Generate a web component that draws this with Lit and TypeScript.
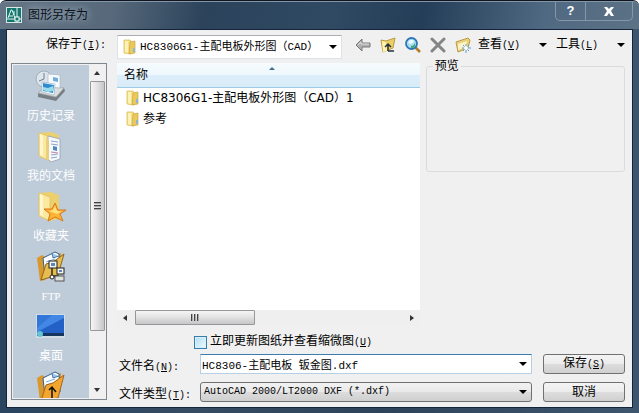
import { LitElement, html, css, svg } from "lit";
import { customElement, state } from "lit/decorators.js";

const folder = html`<svg class="folder" viewBox="0 0 16 16" aria-hidden="true">
  <path d="M2 1h6l1 1v13l-7-1z" fill="#f7e08a" stroke="#d9b64e" stroke-width=".7" />
  <path d="M8 3l5-1v12l-6 1z" fill="#e9c95c" stroke="#cfa640" stroke-width=".7" />
  <path d="M3 2h3v12l-3-1z" fill="#fdf2b8" />
  <path d="M11 9h2v4h-2z" fill="#8fb5d6" />
</svg>`;

const arrow = html`<svg class="arrow" viewBox="0 0 8 4" aria-hidden="true"><path d="M0 0h8l-4 4z" fill="#000" /></svg>`;

const folderBody = svg`
  <path d="M4 3l12-1 8 3v24l-9 2z" fill="#ecd06e"/>
  <path d="M4 3l11 4v24L4 26z" fill="#fbe9a0" stroke="#e2c05c" stroke-width=".8"/>
  <path d="M5 4l3 1v21l-3-1z" fill="#fff6cc"/>`;

const openFolder = svg`
  <path d="M2 8l5-3 3 2 16-4v6L10 30 5 31z" fill="#d9982c"/>
  <path d="M8 8l12-6 4 2 1 18-15 4z" fill="#fafdff" stroke="#2f5f8f"/>
  <path d="M17 3l1 5 6-2" fill="#9cc8ee" stroke="#2f5f8f" stroke-width=".8"/>
  <path d="M11 12l9-3M11 15l10-3" stroke="#7fb0dd"/>`;

const placeIcons = {
  history: svg`
    <circle cx="9" cy="9" r="8" fill="#dde5ec" stroke="#a3afba"/>
    <path d="M9 3v6l-5 2" fill="none" stroke="#6f7e8c"/>
    <path d="M3 23l18 4 8-9 1 3-9 10L3 27z" fill="#777f84"/>
    <path d="M3 23l7-6 19 1-8 9z" fill="#dadedf" stroke="#969da1" stroke-width=".7"/>
    <path d="M13 4l12 1v13l-12-1z" fill="#f6fafd" stroke="#a9bac7" stroke-width=".7"/>
    <path d="M18 7l5 1v4l-5-1z" fill="#70abda"/>
    <path d="M7 12l13 2-1 11-12-3z" fill="#fff" stroke="#9fb3c3" stroke-width=".7"/>
    <path d="M8 13l11 2-1 8-10-2z" fill="#2d8dd0"/>
    <path d="M8 17l5 1 5-2v5l-5 1-5-2z" fill="#9bdcec"/>`,
  documents: svg`${folderBody}
    <path d="M13 6l12 3v20l-9 3-3-3z" fill="#f5f8fc" stroke="#93a3b3" stroke-width=".8"/>
    <path d="M16 11l7 1M16 14l7 1M16 25l7-1M16 28l6-1" stroke="#8ba5cb"/>
    <path d="M18 16l4 1v4l-4-1z" fill="#4f87c3"/>
    <path d="M16 22l7 1" stroke="#c786a0"/>
    <path d="M14 30V11l-3-4v22z" fill="#e9cf79"/>`,
  favorites: svg`${folderBody}
    <path d="M20 13l3 7 8 0-6 4 3 7-8-4-7 4 2-7-6-5 8 0z" fill="#fdb334" stroke="#d9771c"/>
    <path d="M20 16l2 5 5 0-5 3-8-3 4-1z" fill="#ffe17d"/>`,
  ftp: svg`${openFolder}
    <path d="M6 30l5-16 7-2 11-8-6 21z" fill="#e8bd50" stroke="#92651c"/>
    <path d="M17 18v8h6v4" fill="none" stroke="#222" stroke-width="1.4"/>
    <rect x="14" y="11" width="8" height="7" fill="#f6f6ed" stroke="#222"/>
    <rect x="16" y="13" width="4" height="3" fill="#5d86bd"/>
    <rect x="22" y="18" width="7" height="6" fill="#f6f6ed" stroke="#222"/>
    <rect x="24" y="20" width="3" height="2" fill="#5d86bd"/>
    <rect x="20" y="26" width="9" height="5" fill="#dfe2dc" stroke="#555"/>
    <circle cx="17" cy="27" r="2" fill="#fff" stroke="#222"/>`,
  desktop: svg`
    <rect x="1" y="4" width="29" height="24" fill="#d2dce5"/>
    <rect x="2" y="5" width="27" height="19" fill="#2360c5"/>
    <path d="M2 5h27v3L2 22z" fill="#4387e6"/>
    <path d="M2 5h15L2 18z" fill="#3176d8"/>
    <rect x="2" y="23" width="27" height="3" fill="#17365f"/>
    <circle cx="5" cy="24" r="3" fill="#64c3d5"/>`,
  buzzsaw: svg`${openFolder}
    <path d="M6 31l5-16 7-2 11-8-6 23z" fill="#f3a62d" stroke="#a6641a"/>
    <path d="M17 18v12M14 20l3-3 4 5M14 29h6" fill="none" stroke="#111" stroke-width="1.5"/>`,
};

interface Place {
  name: string;
  icon: keyof typeof placeIcons;
}

@customElement("app-root")
export class SaveDrawingDialog extends LitElement {
  @state() private fileName = "HC8306-主配电板 钣金图.dxf";

  private places: Place[] = [
    { name: "历史记录", icon: "history" },
    { name: "我的文档", icon: "documents" },
    { name: "收藏夹", icon: "favorites" },
    { name: "FTP", icon: "ftp" },
    { name: "桌面", icon: "desktop" },
    { name: "", icon: "buzzsaw" },
  ];

  private files = ["HC8306G1-主配电板外形图（CAD）1", "参考"];

  static styles = css`
    * { box-sizing: border-box; }
    :host {
      display: block;
      height: 100vh;
      min-height: 340px;
      color: #000;
      font: 12px/16px "Liberation Sans", "Noto Sans CJK SC", sans-serif;
    }
    button, input, select { font: inherit; color: inherit; margin: 0; padding: 0; }
    svg { display: block; flex: none; }
    .key { font: 10px/16px "Liberation Mono", monospace; }
    .window {
      height: 100%;
      display: flex;
      flex-direction: column;
      padding: 0 6px 5px;
      background: linear-gradient(90deg, #2a4560, #344b62 30%, #2d435a 60%, #3d566e);
      border-top: 1px solid #10151f;
      border-radius: 6px 6px 0 0;
    }
    .titlebar {
      flex: none;
      height: 28px;
      display: flex;
      align-items: flex-start;
      margin: 0 -6px;
      padding: 0 6px;
      border-top: 1px solid #8296a8;
      border-radius: 6px 6px 0 0;
      background: linear-gradient(100deg, #667585, #56687a 18%, #2b435b 32%, #304a63 52%, #243d58 66%, #506982 85%, #5c7285);
    }
    .brand { width: 16px; height: 16px; margin-top: 5px; }
    h1 {
      flex: 1;
      margin: 5px 0 0 6px;
      font-size: 12px;
      font-weight: 400;
      line-height: 16px;
      color: #0b1119;
      text-shadow: 0 0 8px #9aabbb, 0 0 8px #9aabbb;
    }
    .caption {
      display: flex;
      border: 1px solid #8497a8;
      border-top: 0;
      border-radius: 0 0 5px 5px;
    }
    .caption button {
      width: 29px;
      height: 18px;
      display: grid;
      place-items: center;
      border: 0;
      background: none;
      color: #fff;
      font: bold 13px/16px "Liberation Sans", sans-serif;
    }
    .caption button + button { width: 47px; border-left: 1px solid #8497a8; }
    .client {
      flex: 1;
      min-height: 0;
      display: grid;
      grid-template-columns: 96px minmax(0, 1fr);
      grid-template-rows: 28px minmax(0, 1fr);
      column-gap: 10px;
      row-gap: 1px;
      padding: 4px 7px 5px 4px;
      border: 1px solid #a9b8c4;
      outline: 1px solid #14243a;
      outline-offset: -1px;
      background: #f0f0f0;
    }
    .save-in { padding: 2px 1px 0 0; text-align: right; white-space: nowrap; }
    .toolbar { display: flex; align-items: flex-start; padding-top: 1px; min-width: 0; }
    .combo {
      height: 24px;
      display: flex;
      align-items: center;
      background: #fff;
      border: 1px solid #dfe3e8;
    }
    .combo select, .combo input {
      flex: 1;
      min-width: 0;
      height: 100%;
      appearance: none;
      border: 0;
      outline: 0;
      background: none;
      font: 11px/16px "Liberation Mono", "Noto Sans CJK SC", monospace;
    }
    .location { flex: 0 1 225px; padding: 0 4px 0 4px; gap: 2px; border-top-color: #abadb3; }
    .folder { width: 16px; height: 16px; }
    .arrow { width: 8px; height: 4px; pointer-events: none; }
    .tool { width: 25px; height: 20px; display: grid; place-items: center; border: 0; background: none; }
    .tools { display: flex; margin-left: 8px; }
    .menu {
      display: flex;
      align-items: center;
      justify-content: space-between;
      width: 69px;
      height: 20px;
      border: 0;
      background: none;
      white-space: nowrap;
    }
    .menus { display: flex; gap: 9px; margin-left: 3px; }
    .places {
      display: flex;
      min-height: 0;
      margin-bottom: 2px;
      border: 1px solid #7f8790;
      background: #f0f0f0;
      padding: 1px;
    }
    .places ul {
      flex: 1;
      margin: 0;
      padding: 5px 0 0;
      list-style: none;
      overflow: hidden;
      background: #becbd9;
    }
    .place {
      display: flex;
      flex-direction: column;
      align-items: center;
      gap: 5px;
      width: 100%;
      height: 60px;
      border: 0;
      background: none;
      color: #fff;
    }
    .place svg { width: 32px; height: 33px; }
    .place.latin { font: 11px/16px "Liberation Serif", serif; }
    .vbar { width: 16px; display: flex; flex-direction: column; align-items: center; }
    .end { flex: none; width: 16px; height: 16px; display: grid; place-items: center; border: 0; background: none; }
    .vthumb {
      width: 15px;
      flex: 1;
      margin: 0 0 51px;
      display: grid;
      place-items: center;
      border: 1px solid #979797;
      border-radius: 1px;
      background: linear-gradient(90deg, #f5f5f5, #e3e3e3 45%, #c6c6c9);
    }
    .main { display: flex; flex-direction: column; min-width: 0; min-height: 0; }
    .browse { flex: 1; min-height: 0; display: flex; gap: 6px; }
    .list { flex: 304; min-width: 0; display: flex; flex-direction: column; background: #fff; }
    table { width: 100%; border-collapse: collapse; font-family: "DejaVu Sans", "Noto Sans CJK SC", sans-serif; }
    th {
      height: 24px;
      padding: 0 0 0 7px;
      text-align: left;
      font-weight: 400;
      background: linear-gradient(#f6fbfe, #eef8fd 48%, #dceefa 52%, #d8ecf8);
      border-bottom: 1px solid #9ccbe6;
    }
    .heading { display: grid; grid-template-columns: 1fr auto 1fr; }
    .heading svg { width: 6px; height: 3px; }
    td { height: 21px; padding: 0 0 0 8px; }
    .entry { display: flex; align-items: center; gap: 2px; white-space: nowrap; }
    .rows { flex: 1; min-height: 0; overflow: hidden; }
    .hbar { flex: none; display: flex; height: 16px; background: #efefef; }
    .hthumb {
      flex: 0 1 120px;
      height: 15px;
      margin-left: 2px;
      display: grid;
      place-items: center;
      border: 1px solid #979797;
      border-radius: 1px;
      background: linear-gradient(#f5f5f5, #e3e3e3 45%, #c6c6c9);
    }
    .hbar .end:last-child { margin-left: auto; }
    fieldset {
      flex: 198;
      min-width: 0;
      height: 114px;
      margin: -5px 0 0;
      padding: 0;
      border: 1px solid #d9dcdf;
      border-radius: 3px;
    }
    legend { margin-left: 6px; padding: 0 2px; }
    .form {
      flex: none;
      display: grid;
      grid-template-columns: 83px minmax(0, 1fr) 82px;
      grid-template-rows: 27px 28px 20px;
      align-items: start;
      padding-top: 1px;
    }
    .check { grid-column: 1 / -1; display: flex; align-items: center; gap: 3px; padding: 6px 0 0 77px; height: 24px; }
    .check input {
      appearance: none;
      width: 13px;
      height: 13px;
      border: 1px solid #347fae;
      background: linear-gradient(135deg, #b2def5, #eef9fe);
      box-shadow: inset 0 0 0 1px #d9f0fb;
    }
    .form .label { padding: 4px 0 0 2px; white-space: nowrap; }
    .name, .type { height: 20px; margin-right: 11px; padding-right: 4px; }
    .name { border: 1px solid #b5cfe7; border-top-color: #3d7bad; }
    .name input { padding-left: 1px; }
    .drop { width: 12px; height: 18px; display: grid; place-items: center end; border: 0; background: none; }
    .type {
      border: 1px solid #707070;
      border-radius: 3px;
      background: linear-gradient(#f2f2f2, #e9e9e9 48%, #dcdcdc 52%, #cfcfcf);
    }
    .type select { padding-left: 3px; font: 10px/16px "Liberation Mono", monospace; }
    .push {
      height: 20px;
      border: 1px solid #707070;
      border-radius: 3px;
      background: linear-gradient(#f4f4f4, #ececec 48%, #dddddd 52%, #d0d0d0);
    }
  `;

  render() {
    return html`
      <div class="window">
        <header class="titlebar">
          <svg class="brand" viewBox="0 0 16 16" aria-hidden="true">
            <rect width="16" height="16" fill="#d7e8e6" />
            <rect x="1" y="1" width="14" height="14" fill="#12776f" />
            <path d="M2 11L5 3h1l3 8M3 9h4M8 4v4M11 1v14M1 12h14" fill="none" stroke="#eaf5f3" />
            <rect x="9" y="10" width="4" height="4" fill="#12776f" stroke="#fff" />
          </svg>
          <h1>图形另存为</h1>
          <div class="caption">
            <button aria-label="帮助">?</button>
            <button aria-label="关闭">
              <svg width="10" height="9" viewBox="0 0 10 9"><path d="M0 0h3l2 2 2-2h3L7 4l3 5H7L5 6 3 9H0l3-5z" fill="#fff" /></svg>
            </button>
          </div>
        </header>
        <main class="client">
          <label class="save-in" for="location">保存于<span class="key">(<u>I</u>):</span></label>
          <div class="toolbar">
            <div class="combo location">
              ${folder}
              <select id="location"><option>HC8306G1-主配电板外形图（CAD）</option></select>
              ${arrow}
            </div>
            <div class="tools">
              <button class="tool" aria-label="后退">
                <svg width="16" height="14" viewBox="0 0 16 14"><path d="M1 7l6-6v4h8v4H7v4z" fill="#b0b0b0" stroke="#777" /><path d="M3 7l3-3v2h8" fill="none" stroke="#ddd" /></svg>
              </button>
              <button class="tool" aria-label="上一级">
                <svg width="16" height="16" viewBox="0 0 16 16"><path d="M1 3l5 1 9-3-2 10-10 4z" fill="#edcf68" stroke="#b99b3e" /><path d="M2 4l4 1 1 9-4 1z" fill="#fff2b0" /><path d="M8 14V8M5 10l3-3 3 3M8 14h6" fill="none" stroke="#24303c" stroke-width="1.5" /></svg>
              </button>
              <button class="tool" aria-label="搜索 Web">
                <svg width="16" height="16" viewBox="0 0 16 16"><path d="M10 10l5 5" stroke="#b37a28" stroke-width="2.5" /><circle cx="6.5" cy="6.5" r="5.5" fill="#a7def5" stroke="#2e75b5" stroke-width="1.8" /><path d="M3 5q3-4 6-1-1 3-4 3z" fill="#effaff" /><path d="M6 11q5 0 4-5-1 3-4 3z" fill="#3fa665" /></svg>
              </button>
              <button class="tool" aria-label="删除">
                <svg width="16" height="16" viewBox="0 0 16 16"><path d="M2 2l12 12M14 2L2 14" stroke="#858585" stroke-width="3" stroke-linecap="round" /></svg>
              </button>
              <button class="tool" aria-label="新建文件夹">
                <svg width="16" height="16" viewBox="0 0 16 16"><path d="M1 5l12-4 2 2-2 8-10 4z" fill="#ecd078" stroke="#b99b45" /><path d="M3 7l9-3-1 6-8 3z" fill="#fdf3c8" /><path d="M11 7v9M7 11h9M8 8l6 6M14 8l-6 6" stroke="#5c9ed3" /><circle cx="11" cy="11" r="2" fill="#fff" /></svg>
              </button>
            </div>
            <div class="menus">
              <button class="menu"><span>查看<span class="key">(<u>V</u>)</span></span>${arrow}</button>
              <button class="menu"><span>工具<span class="key">(<u>L</u>)</span></span>${arrow}</button>
            </div>
          </div>
          <nav class="places" aria-label="位置">
            <ul>
              ${this.places.map(
                (p) => html`<li><button class="place ${p.icon === "ftp" ? "latin" : ""}" aria-label=${p.name || "Buzzsaw"}>
                  <svg viewBox="0 0 32 33" aria-hidden="true">${placeIcons[p.icon]}</svg>
                  ${p.name ? html`<span>${p.name}</span>` : ""}
                </button></li>`
              )}
            </ul>
            <div class="vbar">
              <button class="end" aria-label="向上滚动"><svg width="6" height="4" viewBox="0 0 6 4"><path d="M0 4l3-4 3 4z" fill="#333" /></svg></button>
              <div class="vthumb"><svg width="7" height="8" viewBox="0 0 7 8"><path d="M0 .5h7M0 3.5h7M0 6.5h7" stroke="#444" /><path d="M0 1.5h7M0 4.5h7M0 7.5h7" stroke="#aaa" /></svg></div>
              <button class="end" aria-label="向下滚动"><svg width="6" height="4" viewBox="0 0 6 4"><path d="M0 0h6L3 4z" fill="#333" /></svg></button>
            </div>
          </nav>
          <section class="main">
            <div class="browse">
              <div class="list">
                <div class="rows">
                  <table>
                    <thead><tr><th><div class="heading"><span>名称</span><svg viewBox="0 0 6 3" aria-hidden="true"><path d="M0 3l3-3 3 3z" fill="#3b6f91" /></svg></div></th></tr></thead>
                    <tbody>
                      ${this.files.map((f) => html`<tr><td><div class="entry">${folder}<span>${f}</span></div></td></tr>`)}
                    </tbody>
                  </table>
                </div>
                <div class="hbar">
                  <button class="end" aria-label="向左滚动"><svg width="4" height="6" viewBox="0 0 4 6"><path d="M4 0v6L0 3z" fill="#333" /></svg></button>
                  <div class="hthumb"><svg width="8" height="7" viewBox="0 0 8 7"><path d="M.5 0v7M3.5 0v7M6.5 0v7" stroke="#444" /><path d="M1.5 0v7M4.5 0v7M7.5 0v7" stroke="#aaa" /></svg></div>
                  <button class="end" aria-label="向右滚动"><svg width="4" height="6" viewBox="0 0 4 6"><path d="M0 0l4 3-4 3z" fill="#333" /></svg></button>
                </div>
              </div>
              <fieldset><legend>预览</legend></fieldset>
            </div>
            <div class="form">
              <label class="check"><input type="checkbox" /><span>立即更新图纸并查看缩微图<span class="key">(<u>U</u>)</span></span></label>
              <label class="label" for="name">文件名<span class="key">(<u>N</u>):</span></label>
              <div class="combo name">
                <input id="name" type="text" .value=${this.fileName} @input=${(e: Event) => (this.fileName = (e.target as HTMLInputElement).value)} />
                <button class="drop" aria-label="文件名历史">${arrow}</button>
              </div>
              <button class="push">保存<span class="key">(<u>S</u>)</span></button>
              <label class="label" for="type">文件类型<span class="key">(<u>T</u>):</span></label>
              <div class="combo type">
                <select id="type"><option>AutoCAD 2000/LT2000 DXF (*.dxf)</option></select>
                ${arrow}
              </div>
              <button class="push">取消</button>
            </div>
          </section>
        </main>
      </div>
    `;
  }
}
